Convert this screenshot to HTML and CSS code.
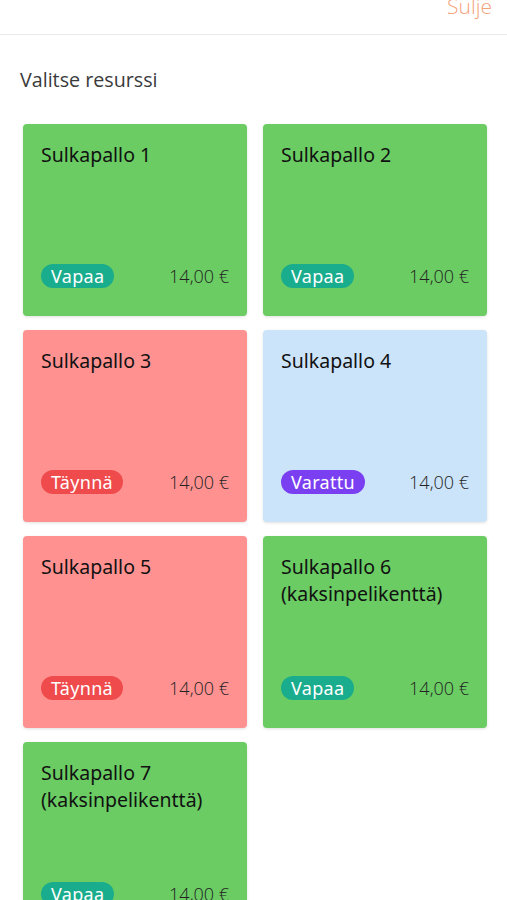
FILE: index.html
```html
<!DOCTYPE html>
<html lang="fi">
<head>
<meta charset="utf-8">
<link rel="stylesheet" href="styles.css">
</head>
<body>
<header class="topbar">
  <span class="close">Sulje</span>
</header>
<main class="content">
  <h1 class="heading">Valitse resurssi</h1>
  <div class="grid">
    <div class="card free">
      <div class="name">Sulkapallo 1</div>
      <div class="foot"><span class="badge b-free">Vapaa</span><span class="price">14,00 €</span></div>
    </div>
    <div class="card free">
      <div class="name">Sulkapallo 2</div>
      <div class="foot"><span class="badge b-free">Vapaa</span><span class="price">14,00 €</span></div>
    </div>
    <div class="card full">
      <div class="name">Sulkapallo 3</div>
      <div class="foot"><span class="badge b-full">Täynnä</span><span class="price">14,00 €</span></div>
    </div>
    <div class="card booked">
      <div class="name">Sulkapallo 4</div>
      <div class="foot"><span class="badge b-booked">Varattu</span><span class="price">14,00 €</span></div>
    </div>
    <div class="card full">
      <div class="name">Sulkapallo 5</div>
      <div class="foot"><span class="badge b-full">Täynnä</span><span class="price">14,00 €</span></div>
    </div>
    <div class="card free">
      <div class="name">Sulkapallo 6<br>(kaksinpelikenttä)</div>
      <div class="foot"><span class="badge b-free">Vapaa</span><span class="price">14,00 €</span></div>
    </div>
    <div class="card free">
      <div class="name">Sulkapallo 7<br>(kaksinpelikenttä)</div>
      <div class="foot"><span class="badge b-free">Vapaa</span><span class="price">14,00 €</span></div>
    </div>
  </div>
</main>
</body>
</html>
```
FILE: styles.css
```css
* { box-sizing: border-box; }
html, body { margin: 0; padding: 0; background: #fff; }
body {
  font-family: "Noto Sans", "Open Sans", sans-serif;
  color: #1a1a1a;
  overflow: hidden;
}
.topbar {
  height: 35px;
  border-bottom: 1px solid #e9e9e9;
  display: flex;
  justify-content: flex-end;
  align-items: flex-start;
  padding-right: 15px;
  overflow: hidden;
}
.close {
  font-family: "Open Sans", sans-serif;
  font-weight: 300;
  font-size: 21px;
  line-height: 24px;
  margin-top: -6px;
  color: #f4a27c;
}
.content { padding: 0 20px 0 23px; }
.heading {
  margin: 0 0 0 -3px;
  padding-top: 32px;
  height: 89px;
  font-family: "Open Sans", sans-serif;
  font-weight: 400;
  font-size: 19.7px;
  line-height: 26px;
  color: #3a3a3a;
}
.grid {
  display: grid;
  grid-template-columns: 224px 224px;
  column-gap: 16px;
  row-gap: 14px;
}
.card {
  height: 192px;
  border-radius: 4px;
  padding: 17px 18px 28px 18px;
  display: flex;
  flex-direction: column;
  box-shadow: 0 1px 3px rgba(0,0,0,0.12);
}
.free { background: #6acc63; }
.full { background: #ff9291; }
.booked { background: #cce4f9; }
.name {
  font-size: 19.5px;
  line-height: 27px;
  color: #111;
}
.foot {
  margin-top: auto;
  display: flex;
  align-items: center;
  justify-content: space-between;
}
.badge {
  height: 24px;
  line-height: 24px;
  padding: 0 10px;
  border-radius: 12px;
  color: #fff;
  font-size: 18px;
  letter-spacing: 0.3px;
}
.b-free { background: #19ad8d; }
.b-full { background: #ef4b4c; }
.b-booked { background: #7b3ff2; }
.price {
  font-family: "Open Sans", sans-serif;
  font-weight: 300;
  font-size: 18px;
  color: #222;
}
```
